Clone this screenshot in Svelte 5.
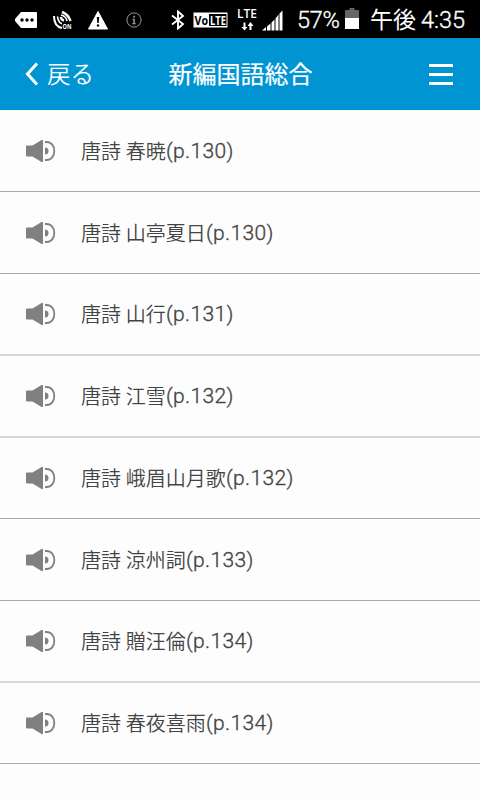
<script lang="ts">
	interface Track {
		title: string;
		page: number;
	}

	const tracks: Track[] = [
		{ title: '春暁', page: 130 },
		{ title: '山亭夏日', page: 130 },
		{ title: '山行', page: 131 },
		{ title: '江雪', page: 132 },
		{ title: '峨眉山月歌', page: 132 },
		{ title: '涼州詞', page: 133 },
		{ title: '贈汪倫', page: 134 },
		{ title: '春夜喜雨', page: 134 }
	];
</script>

<div class="screen">
	<div class="status">
		<svg class="more" width="23" height="16" viewBox="0 0 23 16">
			<path d="M6 0H21Q22 0 22 1V15Q22 16 21 16H6L0 9V7Z" fill="#fff" />
			<circle cx="7" cy="8" r="1.7" />
			<circle cx="12" cy="8" r="1.7" />
			<circle cx="17" cy="8" r="1.7" />
		</svg>
		<svg class="gps" width="20" height="19" viewBox="0 0 20 19">
			<g fill="none" stroke="#fff">
				<path d="M1 5C1 12 4 16 9 17" stroke-width="2" />
				<path d="M4.5 5.5C5 10 7 13 11 13" stroke-width="1.7" />
				<path d="M8 6Q8 9 11 9.5" stroke-width="2.3" />
				<path d="M9 1Q15 3 17.5 10" stroke-width="2.5" />
				<path d="M8 4Q13 5 14 10" stroke-width="1.6" />
			</g>
			<path d="M9 11.5H19V19H9Z" />
			<text x="9.5" y="18" textLength="9" lengthAdjust="spacingAndGlyphs">ON</text>
		</svg>
		<svg class="warn" width="20" height="19" viewBox="0 0 20 19">
			<path d="M10 0.5L19.5 18H0.5Z" fill="#fff" stroke="#fff" stroke-linejoin="round" />
			<path d="M8.8 6H11.2L10.7 12H9.3Z" />
			<circle cx="10" cy="14.5" r="1.2" />
		</svg>
		<svg class="info" width="16" height="16" viewBox="0 0 16 16">
			<circle cx="8" cy="8" r="7.1" fill="none" stroke="#999" />
			<path d="M7.3 3.8H8.9V5.4H7.3ZM6.5 6.8H8.7V11.2H9.7V12.2H6.3V11.2H7.4V7.8H6.5Z" fill="#aaa" />
		</svg>
		<svg class="bt" width="14" height="20" viewBox="0 0 14 20">
			<path d="M1 5.5L12 14L7 18.5V1.5L12 6L1 14.5" fill="none" stroke="#fff" stroke-width="1.9" />
		</svg>
		<svg class="volte" width="36" height="16" viewBox="0 0 36 16">
			<rect x="0.5" y="0.5" width="34" height="15" fill="#fff" />
			<rect x="16" y="2" width="17.5" height="12" />
			<text x="1.5" y="12.5" textLength="13.5" lengthAdjust="spacingAndGlyphs">Vo</text>
			<text class="inv" x="17" y="12.5" textLength="16" lengthAdjust="spacingAndGlyphs">LTE</text>
		</svg>
		<svg class="lte" width="21" height="30" viewBox="0 0 21 30">
			<text x="0" y="12.5" textLength="20" lengthAdjust="spacingAndGlyphs">LTE</text>
			<path d="M6.5 17.5H8.5V22H10.5L7.5 25.5L4.5 22H6.5ZM12.5 25H14.5V21H16.5L13.5 17L10.5 21H12.5Z" fill="#fff" />
		</svg>
		<svg class="signal" width="22" height="21" viewBox="0 0 22 21">
			<path d="M0 20.5L4 17V20.5ZM5 16.5L8.5 13.5V20.5H5ZM9.5 12.5L12.5 9.5V20.5H9.5ZM13.5 8.5L16.5 4.5V20.5H13.5ZM17.5 3.5L20.5 0.5V20.5H17.5Z" fill="#fff" />
		</svg>
		<span class="percent">57%</span>
		<svg class="battery" width="14" height="21" viewBox="0 0 14 21">
			<path d="M0 2H4.5V0H9.5V2H14V10H0Z" fill="#666" />
			<path d="M0 10H14V21H0Z" fill="#fff" />
		</svg>
		<span class="period">午後</span>
		<span class="clock">4:35</span>
	</div>

	<header>
		<button class="back">
			<svg width="14" height="24" viewBox="0 0 14 24">
				<path d="M12 1.5L2.5 12L12 22.5" fill="none" stroke="#fff" stroke-width="3" />
			</svg>
			<span>戻る</span>
		</button>
		<h1>新編国語総合</h1>
		<button class="menu" aria-label="メニュー">
			<i></i>
			<i></i>
			<i></i>
		</button>
	</header>

	<ul>
		{#each tracks as track, i}
			<li class:short={i === 4 || i === 7} class:soft={i === 2 || i === 3 || i === 6}>
				<svg width="30" height="24" viewBox="0 0 30 24">
					<path d="M1 6.5H6.5L15.5 1H17V23H15.5L6.5 17.5H1Q0 17.5 0 16.5V7.5Q0 6.5 1 6.5Z" fill="#808080" />
					<path d="M19 8.5A3.5 3.5 0 0 1 19 15.5Z" fill="#808080" />
					<path d="M19 3H20.5C25.5 3 28.3 7 28.3 12S25.5 21 20.5 21H19" fill="none" stroke="#808080" stroke-width="1.8" />
				</svg>
				<span class="name">唐詩 {track.title}</span><span class="page">(p.{track.page})</span>
			</li>
		{/each}
	</ul>
</div>

<style>
	:global(body) {
		margin: 0;
		background: #fdfdfd;
	}

	.screen {
		width: 480px;
		height: 800px;
		overflow: hidden;
		background: #fdfdfd;
		font-family: Roboto, 'Noto Sans CJK JP', sans-serif;
	}

	svg {
		display: block;
		flex: none;
	}

	.status {
		display: flex;
		align-items: center;
		box-sizing: border-box;
		height: 38px;
		padding: 2px 0 0 15px;
		background: #000;
		color: #fff;
		white-space: nowrap;
	}

	.status text {
		font: bold 7px 'Open Sans', sans-serif;
		fill: #fff;
	}

	.gps {
		margin-left: 15px;
	}

	.warn {
		margin-left: 15px;
	}

	.info {
		margin-left: 18px;
	}

	.bt {
		margin-left: 29px;
	}

	.volte {
		margin-left: 8px;
	}

	.status .volte text {
		font-size: 12px;
		fill: #000;
	}

	.status .volte text.inv {
		fill: #fff;
	}

	.lte {
		margin-left: 8px;
	}

	.status .lte text {
		font-size: 12px;
		font-weight: 600;
	}

	.signal {
		margin-left: 4px;
	}

	.percent,
	.clock {
		font-size: 23.5px;
		font-weight: 300;
		line-height: 36px;
		-webkit-text-stroke: 0.35px #fff;
	}

	.percent {
		width: 43px;
		margin-left: 13px;
		letter-spacing: -0.3px;
	}

	.battery {
		margin: 0 0 3px 5px;
	}

	.period {
		margin: 1px 0 0 11px;
		font-size: 23px;
		font-weight: 400;
		line-height: 36px;
	}

	.clock {
		margin-left: 5px;
	}

	header {
		display: grid;
		grid-template-columns: 120px 240px 120px;
		align-items: center;
		height: 72px;
		background: #0095d2;
		color: #fff;
	}

	button {
		display: flex;
		padding: 0;
		border: 0;
		background: none;
		color: inherit;
		font-family: inherit;
	}

	.back {
		align-items: center;
		padding-left: 25px;
		gap: 8px;
		font-size: 23.5px;
		font-weight: 350;
		line-height: 34px;
		white-space: nowrap;
	}

	.back span {
		padding-top: 1px;
	}

	h1 {
		margin: 0;
		padding: 2px 0 0 1px;
		font-size: 24px;
		font-weight: 400;
		line-height: 37px;
		text-align: center;
		-webkit-text-stroke: 0.2px #fff;
	}

	.menu {
		flex-direction: column;
		justify-self: end;
		gap: 6px;
		margin-right: 27px;
	}

	.menu i {
		width: 24px;
		height: 3px;
		background: #fff;
	}

	ul {
		margin: 0;
		padding: 0;
		list-style: none;
	}

	li {
		display: flex;
		align-items: center;
		box-sizing: border-box;
		height: 82px;
		padding: 0 0 0 26px;
		border-bottom: 1px solid #aaa;
		color: #444;
		white-space: nowrap;
	}

	li.short {
		height: 81px;
	}

	li.soft {
		border-bottom: 2px solid #d8d8d8;
	}

	.name {
		margin-left: 25px;
		padding-bottom: 1px;
		font-size: 20px;
		font-weight: 350;
	}

	.page {
		font-size: 21px;
		font-weight: 300;
		letter-spacing: 0.4px;
		-webkit-text-stroke: 0.35px #444;
	}
</style>
